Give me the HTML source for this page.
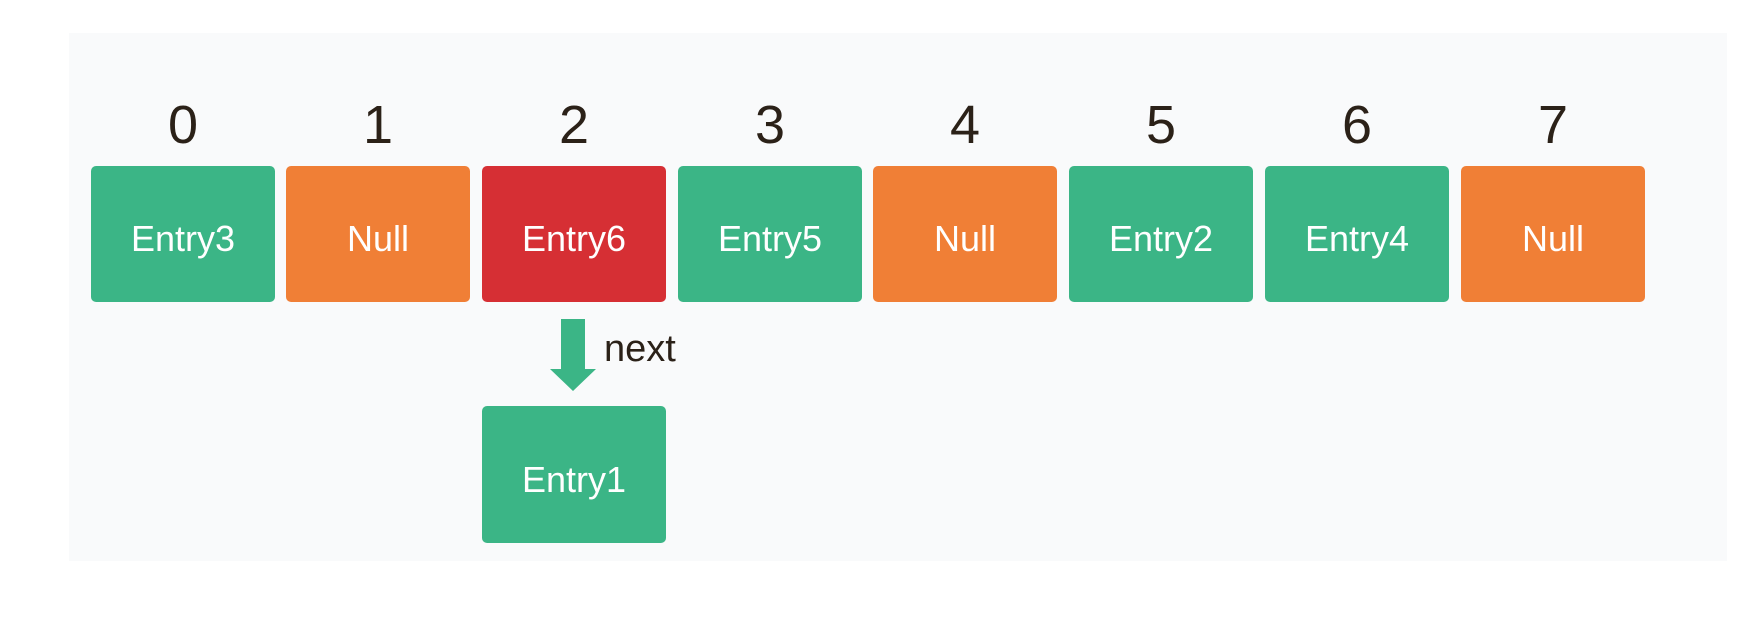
<!DOCTYPE html>
<html><head><style>
body{margin:0;width:1756px;height:640px;background:#fff;position:relative;overflow:hidden;font-family:"Liberation Sans",sans-serif}
.panel{position:absolute;left:69px;top:33px;width:1658px;height:528px;background:#f9fafb}
.b{position:absolute;top:166px;width:184px;height:136px;border-radius:5px;color:#fff;font-size:36px;display:flex;align-items:center;justify-content:center;box-sizing:border-box;padding-top:10px}
.g{background:#3bb586}.o{background:#f07f36}.r{background:#d62f34}
.n{position:absolute;top:94px;width:184px;text-align:center;font-size:54px;color:#2b2118}
</style></head><body>
<div class="panel"></div>
<div class="n" style="left:91px">0</div><div class="n" style="left:286px">1</div><div class="n" style="left:482px">2</div><div class="n" style="left:678px">3</div><div class="n" style="left:873px">4</div><div class="n" style="left:1069px">5</div><div class="n" style="left:1265px">6</div><div class="n" style="left:1461px">7</div>
<div class="b g" style="left:91px">Entry3</div>
<div class="b o" style="left:286px">Null</div>
<div class="b r" style="left:482px">Entry6</div>
<div class="b g" style="left:678px">Entry5</div>
<div class="b o" style="left:873px">Null</div>
<div class="b g" style="left:1069px">Entry2</div>
<div class="b g" style="left:1265px">Entry4</div>
<div class="b o" style="left:1461px">Null</div>
<svg style="position:absolute;left:0;top:0" width="1756" height="640"><path d="M561 319H585V369H596L573 391L550 369H561Z" fill="#3bb586"/></svg>
<div style="position:absolute;left:604px;top:328px;font-size:38px;color:#2b2118">next</div>
<div class="b g" style="left:482px;top:406px;height:137px">Entry1</div>
</body></html>
